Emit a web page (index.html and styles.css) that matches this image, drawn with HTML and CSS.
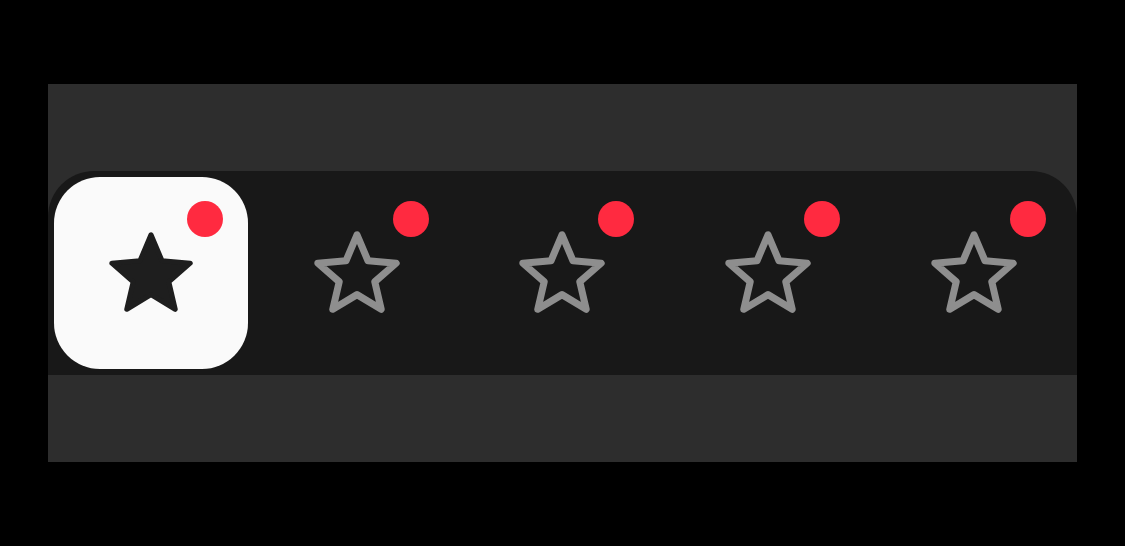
FILE: index.html
```html
<!DOCTYPE html>
<html>
<head>
<meta charset="utf-8">
<link rel="stylesheet" href="styles.css">
</head>
<body>
<div class="panel">
  <div class="bar">
    <div class="item active">
      <div class="tile">
        <svg class="star" viewBox="0 0 24 24"><path class="fill" d="M12 17.27L18.18 21l-1.64-7.03L22 9.24l-7.19-.61L12 2 9.19 8.63 2 9.24l5.46 4.73L5.82 21z"/></svg>
      </div>
      <span class="badge"></span>
    </div>
    <div class="item">
      <svg class="star" viewBox="0 0 24 24"><path class="line" d="M12 17.27L18.18 21l-1.64-7.03L22 9.24l-7.19-.61L12 2 9.19 8.63 2 9.24l5.46 4.73L5.82 21z"/></svg>
      <span class="badge"></span>
    </div>
    <div class="item">
      <svg class="star" viewBox="0 0 24 24"><path class="line" d="M12 17.27L18.18 21l-1.64-7.03L22 9.24l-7.19-.61L12 2 9.19 8.63 2 9.24l5.46 4.73L5.82 21z"/></svg>
      <span class="badge"></span>
    </div>
    <div class="item">
      <svg class="star" viewBox="0 0 24 24"><path class="line" d="M12 17.27L18.18 21l-1.64-7.03L22 9.24l-7.19-.61L12 2 9.19 8.63 2 9.24l5.46 4.73L5.82 21z"/></svg>
      <span class="badge"></span>
    </div>
    <div class="item">
      <svg class="star" viewBox="0 0 24 24"><path class="line" d="M12 17.27L18.18 21l-1.64-7.03L22 9.24l-7.19-.61L12 2 9.19 8.63 2 9.24l5.46 4.73L5.82 21z"/></svg>
      <span class="badge"></span>
    </div>
  </div>
</div>
</body>
</html>
```
FILE: styles.css
```css
html, body {
  margin: 0;
  padding: 0;
  background: #000;
  font-family: "Liberation Sans", Arial, sans-serif;
}
body {
  padding: 84px 48px 0 48px;
}
.panel {
  width: 1029px;
  height: 378px;
  background: #2d2d2d;
  display: flex;
  align-items: center;
}
.bar {
  width: 100%;
  height: 204px;
  background: #181818;
  border-radius: 46px 46px 0 0;
  display: grid;
  grid-template-columns: repeat(5, 1fr);
}
.item {
  position: relative;
  display: flex;
  align-items: center;
  justify-content: center;
}
.item.active {
  padding: 6px;
}
.tile {
  width: 100%;
  height: 100%;
  background: #fafafa;
  border-radius: 46px;
  display: flex;
  align-items: center;
  justify-content: center;
}
.star {
  width: 94px;
  height: 94px;
  margin-top: 2px;
  display: block;
}
.fill {
  fill: #1e1e1e;
  stroke: #1e1e1e;
  stroke-width: 1.3;
  stroke-linejoin: round;
}
.line {
  fill: none;
  stroke: #8e8e8e;
  stroke-width: 1.8;
  stroke-linejoin: round;
}
.badge {
  position: absolute;
  top: 30px;
  left: calc(50% + 36px);
  width: 36px;
  height: 36px;
  border-radius: 50%;
  background: #ff2a40;
}
```
